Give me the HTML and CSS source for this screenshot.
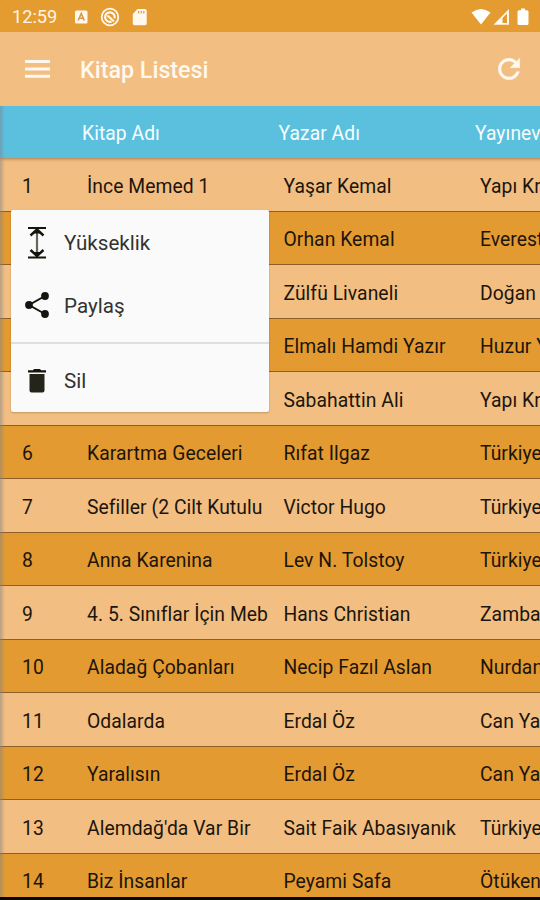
FILE: index.html
```html
<!DOCTYPE html>
<html lang="tr">
<head>
<meta charset="utf-8">
<title>Kitap Listesi</title>
<link rel="stylesheet" href="styles.css">
</head>
<body>
<div class="screen">
  <div class="status">
    <span class="clock">12:59</span>
    <svg class="notif" width="74" height="20" viewBox="0 0 74 20">
      <rect x="1" y="3.5" width="12.5" height="13" rx="1.5" fill="#fff8ee"/>
      <path d="M4.2 13.5 7.25 6.5l3.05 7M5.4 11.2h3.800" fill="none" stroke="#d99a45" stroke-width="1.6"/>
      <circle cx="36" cy="10" r="8.3" fill="none" stroke="#fff8ee" stroke-width="1.8"/>
      <path d="M37.500 14.600a4.800 4.800 0 1 1 3-3.200M33.500 8.500l6.500 6" fill="none" stroke="#fff8ee" stroke-width="2.200"/>
      <path d="M63.500 2H71a1.700 1.700 0 0 1 1.700 1.700V16.500A1.700 1.700 0 0 1 71 18.200H60.500a1.700 1.700 0 0 1-1.700-1.700V7z" fill="#fff8ee"/>
      <path d="M64.600 4v2.500M67.200 4v2.500M69.800 4v2.500" stroke="#d99a45" stroke-width="1.200"/>
    </svg>
    <svg class="signals" width="60" height="20" viewBox="0 0 60 20">
      <path d="M0.500 5.500Q10 -1.500 19.500 5.500L10 17.500z" fill="#fff"/>
      <path d="M22.500 17.700 38 2v15.700z" fill="#fff8ee"/>
      <path d="M31.500 11 36 6.500v9.500h-4.500z" fill="#e49b30"/>
      <path d="M50 1.500h4V3.200h2a1.500 1.500 0 0 1 1.500 1.500v11.800A1.500 1.500 0 0 1 56 18h-8a1.500 1.500 0 0 1-1.500-1.500V4.700A1.500 1.500 0 0 1 48 3.200h2z" fill="#fff"/>
    </svg>
  </div>
  <header class="appbar">
    <svg class="burger" width="26" height="20" viewBox="0 0 26 20"><path d="M0 2.500h25M0 10h25M0 17.200h25" stroke="#fff8ef" stroke-width="3"/></svg>
    <h1 class="title">Kitap Listesi</h1>
    <svg class="refresh" width="32" height="32" viewBox="0 0 24 24"><path fill="#fff8ef" stroke="#fff8ef" stroke-width=".4" d="M17.650 6.350C16.200 4.900 14.210 4 12 4c-4.420 0-7.990 3.580-7.990 8s3.570 8 7.990 8c3.730 0 6.840-2.550 7.730-6h-2.080c-.82 2.330-3.040 4-5.650 4-3.310 0-6-2.690-6-6s2.690-6 6-6c1.660 0 3.140.69 4.220 1.780L13 11h7V4l-2.350 2.350z"/></svg>
  </header>
  <main class="table">
    <div class="row head"><span></span><span>Kitap Adı</span><span>Yazar Adı</span><span>Yayınevi</span></div>
    <div class="row"><span>1</span><span>İnce Memed 1</span><span>Yaşar Kemal</span><span>Yapı Kredi</span></div>
    <div class="row alt"><span></span><span></span><span>Orhan Kemal</span><span>Everest</span></div>
    <div class="row"><span></span><span></span><span>Zülfü Livaneli</span><span>Doğan</span></div>
    <div class="row alt"><span></span><span></span><span>Elmalı Hamdi Yazır</span><span>Huzur Yayın</span></div>
    <div class="row"><span></span><span></span><span>Sabahattin Ali</span><span>Yapı Kredi</span></div>
    <div class="row alt"><span>6</span><span>Karartma Geceleri</span><span>Rıfat Ilgaz</span><span>Türkiye</span></div>
    <div class="row"><span>7</span><span>Sefiller (2 Cilt Kutulu</span><span>Victor Hugo</span><span>Türkiye</span></div>
    <div class="row alt"><span>8</span><span>Anna Karenina</span><span>Lev N. Tolstoy</span><span>Türkiye</span></div>
    <div class="row"><span>9</span><span>4. 5. Sınıflar İçin Meb</span><span>Hans Christian</span><span>Zambak</span></div>
    <div class="row alt"><span>10</span><span>Aladağ Çobanları</span><span>Necip Fazıl Aslan</span><span>Nurdan</span></div>
    <div class="row"><span>11</span><span>Odalarda</span><span>Erdal Öz</span><span>Can Yayın</span></div>
    <div class="row alt"><span>12</span><span>Yaralısın</span><span>Erdal Öz</span><span>Can Yayın</span></div>
    <div class="row"><span>13</span><span>Alemdağ'da Var Bir</span><span>Sait Faik Abasıyanık</span><span>Türkiye</span></div>
    <div class="row alt"><span>14</span><span>Biz İnsanlar</span><span>Peyami Safa</span><span>Ötüken</span></div>
    <div class="edge"></div>
  </main>
  <nav class="menu">
    <div class="item">
      <svg width="26" height="34" viewBox="0 0 26 34"><path d="M4 2h18M4 31.500h18" stroke="#15150f" stroke-width="2.200"/><path d="M13 4v26" stroke="#66665f" stroke-width="2.200"/><path d="M6.500 9.500 13 3.500l6.500 6M6.500 24l6.500 6 6.500-6" fill="none" stroke="#15150f" stroke-width="2.400"/><path d="M9 7.500 13 3.500l4 4zM9 26l4 4 4-4z" fill="#15150f"/></svg>
      <span>Yükseklik</span>
    </div>
    <div class="item share">
      <svg width="26" height="28" viewBox="0 0 26 28"><path d="M21 5 5 14l16 9" fill="none" stroke="#15150f" stroke-width="2"/><g fill="#15150f"><circle cx="21" cy="5" r="3.900"/><circle cx="5" cy="14" r="3.900"/><circle cx="21" cy="23" r="3.900"/></g></svg>
      <span>Paylaş</span>
    </div>
    <div class="item last">
      <svg width="26" height="26" viewBox="0 0 26 26"><path d="M4 2.200h5L10 1h6l1 1.200h5v2.300H4z" fill="#15150f"/><path d="M5.500 6h15v16.500a2 2 0 0 1-2 2h-11a2 2 0 0 1-2-2z" fill="#25241a"/></svg>
      <span>Sil</span>
    </div>
  </nav>
  <div class="navbar"></div>
</div>
</body>
</html>
```
FILE: styles.css
```css
* { box-sizing: border-box; }
body { margin: 0; font-family: Roboto, "Liberation Sans", sans-serif; }
.screen { position: relative; display: flex; flex-direction: column; width: 540px; height: 900px; overflow: hidden; background: #f2be82; }
.status { display: flex; align-items: center; height: 32px; padding: 1px 9px 0 12px; background: #e49b30; flex: none; }
.clock { width: 62px; font-size: 18.2px; color: #fff4e4; }
.notif { margin-top: 1px; }
.signals { margin-left: auto; }
.appbar { display: flex; align-items: center; height: 74px; flex: none; padding: 0 15px 0 25px; background: #f2be82; }
.title { margin: 2px 0 0 29px; font-size: 23.3px; font-weight: 500; color: #fff8ef; }
.refresh { margin-left: auto; }
.table { position: relative; flex: 1; min-height: 0; overflow: hidden; }
.row { display: grid; grid-template-columns: 65px 196.500px 196.500px 200px; align-items: center; width: 680px; height: 53.5px; padding: 4px 0 0 22px; border-bottom: 1.5px solid #8f5f28; background: #f2be82; color: #1c150c; font-size: 19.3px; letter-spacing: 0.06px; white-space: nowrap; }
.alt { background: #e39a30; }
.head { height: 52px; padding: 3px 0 0 17px; border: 0; background: #5bc0de; color: #f7fdff; box-shadow: 0 1px 3px rgba(90, 60, 30, .5); position: relative; }
.edge { position: absolute; left: 0; top: 0; width: 5px; height: 100%; background: linear-gradient(90deg, rgba(125, 130, 135, .5), rgba(125, 130, 135, 0)); }
.menu { position: absolute; left: 11px; top: 210px; width: 258px; height: 202px; padding-top: 1px; border-radius: 2px; background: #fafafa; box-shadow: 0 1px 2px rgba(90, 60, 20, .3); }
.item { display: flex; align-items: center; gap: 14px; height: 63px; padding-left: 13px; font-size: 20.6px; color: #33332f; }
.share svg { margin-top: -2px; }
.last { height: 75px; margin-top: 5px; border-top: 2px solid #dfdfdf; }
.navbar { flex: none; height: 3px; background: #0c0700; }
```
